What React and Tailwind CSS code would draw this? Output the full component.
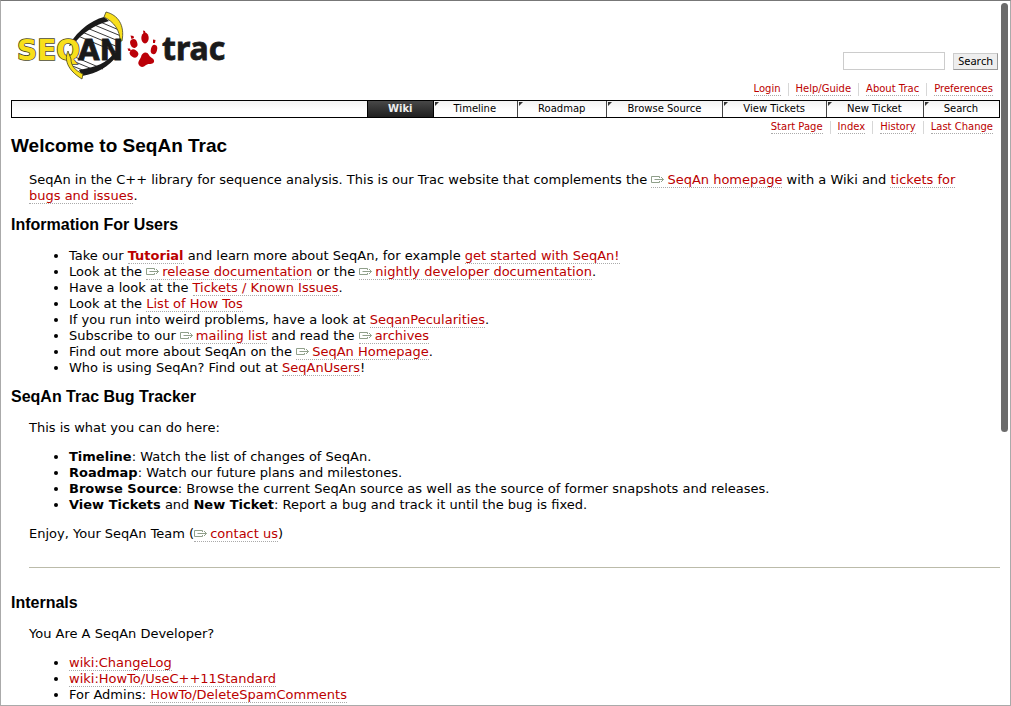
import React from "react";

const linkClass =
  "text-[#bb0000] border-b border-dotted border-[#aaaaaa] hover:bg-[#eeeeee]";

function Link({ children, bold }) {
  return (
    <a href="#" className={bold ? `${linkClass} font-bold` : linkClass}>
      {children}
    </a>
  );
}

function ExtLink({ children }) {
  return (
    <a href="#" className={linkClass}>
      <svg
        className="mr-0.5 inline-block h-2 w-3.5 align-baseline"
        viewBox="0 0 14 8"
        fill="none"
        stroke="#8f9f8a"
        aria-hidden="true"
      >
        <path d="M8.5 2V.5H.5v6h8V5M3.500 3.500H12.500M10 1L12.500 3.500L10 6" />
      </svg>
      {children}
    </a>
  );
}

function Logo() {
  return (
    <svg
      className="mb-[11px] block h-[76px] w-[220px]"
      viewBox="11 10 220 76"
      role="img"
      aria-label="SeqAn Trac"
    >
      <path
        d="M105 19C92 21 75 35 69 52C67 60 70 70 81 74C97 70 114 60 120 42C122 31 117 23 105 19Z"
        fill="#fff"
      />
      <g stroke="#222" strokeWidth="0.9">
        <path d="M98 22L119 31M92 25L121 37M87 29L121 43M82 33L118 48M78 37L116 53M68 55L103 70M68 60L97 72M70 66L90 74" />
      </g>
      <path
        d="M104 18C91 21 75 34 69 47L74 45C82 34 94 26 109 22ZM79 71C96 68 107 64 114 54L118 56C108 68 98 74 82 77Z"
        fill="#1a1a1a"
      />
      <path
        d="M106 13C118 16 125 26 122 42L120 42C120 31 114 23 104 18Z"
        fill="#f8df1b"
        stroke="#454322"
        strokeWidth="0.8"
      />
      <text
        x="17"
        y="61"
        fontFamily="'DejaVu Sans', sans-serif"
        fontWeight="700"
        fontSize="28"
        fill="#f8df1b"
        stroke="#4c4a2a"
        strokeWidth="1.6"
        paintOrder="stroke"
      >
        SEQ
      </text>
      <path
        d="M68 52C64 60 67 71 82 80L83 75C74 71 71 66 71 60Z"
        fill="#f8df1b"
        stroke="#454322"
        strokeWidth="0.8"
      />
      <text
        x="78"
        y="61"
        fontFamily="'DejaVu Sans', sans-serif"
        fontWeight="700"
        fontSize="28"
        fill="#1a1a1a"
        stroke="#1a1a1a"
        strokeWidth="0.8"
      >
        AN
      </text>
      <g fill="#bb0008">
        <ellipse cx="133.800" cy="44.500" rx="3.500" ry="4.400" transform="rotate(-20 133.800 44.500)" />
        <ellipse cx="145" cy="39" rx="3.700" ry="5.400" />
        <ellipse cx="154" cy="50.500" rx="3.100" ry="4.700" transform="rotate(14 154 50.500)" />
        <ellipse cx="134" cy="54.500" rx="4.500" ry="3.600" transform="rotate(35 134 54.500)" />
        <path d="M139 66C137 63 140 61 141 58C142 53 147 52 149 56C150 59 155 59 154 63C152 66 149 64 146 66C143 69 140 68 139 66Z" />
        <path d="M130.500 36.500L133.500 37L134 39L131.500 40ZM143 31.500L145 32L145.500 34.500L143.500 34.500ZM153 40.500L155.500 41L155 44L153 44ZM127.500 49.500L130 49.500L131 52L128.500 52Z" />
      </g>
      <text
        x="162"
        y="61"
        fontFamily="'Noto Sans', sans-serif"
        fontWeight="700"
        fontSize="32"
        fill="#1a1a1a"
        stroke="#1a1a1a"
        strokeWidth="0.8"
      >
        trac
      </text>
    </svg>
  );
}

function SmallNav({ items, label }) {
  return (
    <nav aria-label={label}>
      <ul className="flex justify-end text-[10px] leading-3">
        {items.map((item, i) => (
          <li
            key={item}
            className={i < items.length - 1 ? "border-r border-[#d7d7d7] px-[7px]" : "px-[7px]"}
          >
            <a
              href="#"
              className="inline-block border-b border-dotted border-[#aaaaaa] text-[#bb0000]"
            >
              {item}
            </a>
          </li>
        ))}
      </ul>
    </nav>
  );
}

const tabs = ["Timeline", "Roadmap", "Browse Source", "View Tickets", "New Ticket", "Search"];

function MainNav() {
  return (
    <nav
      aria-label="Main"
      className="mt-1 border border-black bg-linear-to-b from-[#f2f2f2] to-white to-60%"
    >
      <ul className="flex justify-end text-[10px] leading-4">
        <li className="border-x border-black bg-linear-to-b from-[#484848] to-[#202020]">
          <a href="#" className="block px-5 font-bold text-[#eeeeee]">
            Wiki
          </a>
        </li>
        {tabs.map((tab, i) => (
          <li key={tab} className={i > 0 ? "flex border-l border-[#444444]" : "flex"}>
            <svg className="mt-px ml-px h-1 w-1" viewBox="0 0 4 4" aria-hidden="true">
              <path d="M0 0H4L0 4Z" fill="#333" />
            </svg>
            <a href="#" className="block pr-[21px] pl-[15px] text-black">
              {tab}
            </a>
          </li>
        ))}
      </ul>
    </nav>
  );
}

function Heading({ children }) {
  return (
    <h2 className="font-['Liberation_Sans',Arial,sans-serif] text-base leading-5 font-bold">
      {children}
    </h2>
  );
}

function List({ children }) {
  return <ul className="ml-[58px] list-disc">{children}</ul>;
}

export default function App() {
  return (
    <div className="relative min-h-screen border border-[#aaaaaa] border-t-[#777777] bg-white pr-2.5 pl-2.5 font-['DejaVu_Sans',Verdana,sans-serif] text-[13px] leading-4 text-black">
      <header>
        <div className="flex items-end justify-between pt-2">
          <Logo />
          <div className="flex flex-col items-end">
            <form className="mr-0.5 flex items-center gap-2" onSubmit={(e) => e.preventDefault()}>
              <input
                type="text"
                aria-label="Search"
                className="h-[18px] w-[102px] border border-[#cccccc] bg-white px-1 text-[11px] outline-none"
              />
              <button
                type="submit"
                className="h-[17px] border border-[#999999] border-t-[#cccccc] border-l-[#cccccc] bg-[#eeeeee] px-1 font-['Noto_Sans','Open_Sans',sans-serif] text-[11px] leading-[14px] text-black"
              >
                Search
              </button>
            </form>
            <div className="mt-[13px]">
              <SmallNav
                label="Account"
                items={["Login", "Help/Guide", "About Trac", "Preferences"]}
              />
            </div>
          </div>
        </div>
        <MainNav />
        <div className="mt-[3px]">
          <SmallNav label="Wiki pages" items={["Start Page", "Index", "History", "Last Change"]} />
        </div>
      </header>

      <main>
        <h1 className="font-['Liberation_Sans',Arial,sans-serif] text-[19px] leading-6 font-bold">
          Welcome to SeqAn Trac
        </h1>
        <p className="mt-3.5 mr-3 ml-[18px]">
          SeqAn in the C++ library for sequence analysis. This is our Trac website that complements
          the <ExtLink>SeqAn homepage</ExtLink> with a Wiki and{" "}
          <Link>tickets for bugs and issues</Link>.
        </p>

        <section className="mt-[11px] space-y-[13px]">
          <Heading>Information For Users</Heading>
          <List>
            <li>
              Take our <Link bold>Tutorial</Link> and learn more about SeqAn, for example{" "}
              <Link>get started with SeqAn!</Link>
            </li>
            <li>
              Look at the <ExtLink>release documentation</ExtLink> or the{" "}
              <ExtLink>nightly developer documentation</ExtLink>.
            </li>
            <li>
              Have a look at the <Link>Tickets / Known Issues</Link>.
            </li>
            <li>
              Look at the <Link>List of How Tos</Link>
            </li>
            <li>
              If you run into weird problems, have a look at <Link>SeqanPecularities</Link>.
            </li>
            <li>
              Subscribe to our <ExtLink>mailing list</ExtLink> and read the{" "}
              <ExtLink>archives</ExtLink>
            </li>
            <li>
              Find out more about SeqAn on the <ExtLink>SeqAn Homepage</ExtLink>.
            </li>
            <li>
              Who is using SeqAn? Find out at <Link>SeqAnUsers</Link>!
            </li>
          </List>
        </section>

        <section className="mt-[11px] space-y-[13px]">
          <Heading>SeqAn Trac Bug Tracker</Heading>
          <p className="ml-[18px]">This is what you can do here:</p>
          <List>
            <li>
              <b>Timeline</b>: Watch the list of changes of SeqAn.
            </li>
            <li>
              <b>Roadmap</b>: Watch our future plans and milestones.
            </li>
            <li>
              <b>Browse Source</b>: Browse the current SeqAn source as well as the source of former
              snapshots and releases.
            </li>
            <li>
              <b>View Tickets</b> and <b>New Ticket</b>: Report a bug and track it until the bug is
              fixed.
            </li>
          </List>
          <p className="ml-[18px]">
            Enjoy, Your SeqAn Team (<ExtLink>contact us</ExtLink>)
          </p>
        </section>

        <hr className="mt-[25px] ml-[18px] border-[#bbbbaa]" />

        <section className="mt-[25px] space-y-[13px]">
          <Heading>Internals</Heading>
          <p className="ml-[18px]">You Are A SeqAn Developer?</p>
          <List>
            <li>
              <Link>wiki:ChangeLog</Link>
            </li>
            <li>
              <Link>wiki:HowTo/UseC++11Standard</Link>
            </li>
            <li>
              For Admins: <Link>HowTo/DeleteSpamComments</Link>
            </li>
          </List>
        </section>
      </main>

      <div
        aria-hidden="true"
        className="absolute top-0.5 right-0.5 h-[429px] w-[7px] rounded-full bg-[#6b6b6b]"
      />
    </div>
  );
}
